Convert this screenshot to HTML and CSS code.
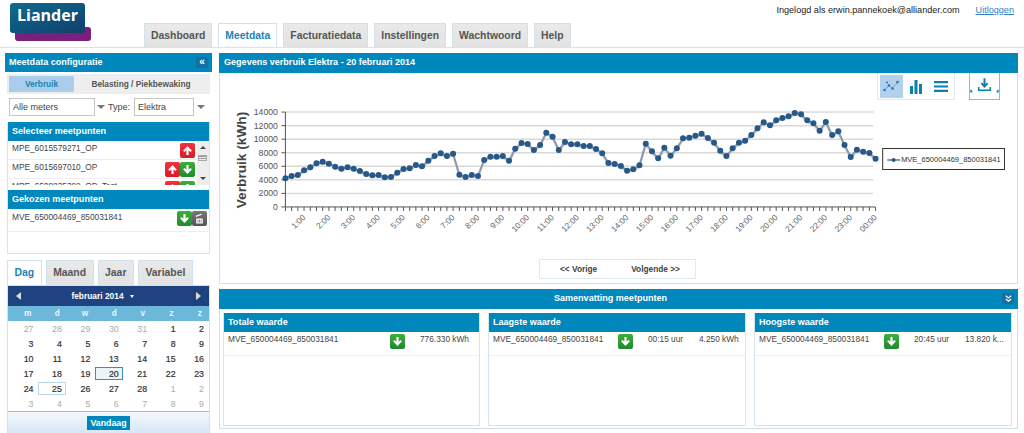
FILE: index.html
```html
<!DOCTYPE html>
<html>
<head>
	<meta charset="utf-8">
	<title>Meetdata</title>
	<link rel="stylesheet" href="styles.css">
</head>
<body>
	<svg class="defs" width="0" height="0">
		<symbol id="arrow-up" viewBox="0 0 10 10"><path d="M5 1 9 5.2 7.6 6.4 6 4.8V9H4V4.8L2.4 6.4 1 5.2z" fill="#fff"/></symbol>
		<symbol id="arrow-down" viewBox="0 0 10 10"><path d="M5 9 9 4.8 7.6 3.6 6 5.2V1H4v4.2L2.4 3.6 1 4.8z" fill="#fff"/></symbol>
		<symbol id="bin" viewBox="0 0 10 10"><path d="M2 5h6v4.5H2zM1.5 2.6 6.6.6l.4 1-5.1 2z" fill="#fff"/><path d="M3.6 6v2.6M5 6v2.6M6.4 6v2.6" stroke="#555" stroke-width=".6"/></symbol>
	</svg>

	<div class="header">
		<div class="logo">
			<div class="logo-purple"></div>
			<div class="logo-blue">Liander</div>
		</div>
		<div class="tabs main-tabs">
			<span class="tab">Dashboard</span>
			<span class="tab active">Meetdata</span>
			<span class="tab">Facturatiedata</span>
			<span class="tab">Instellingen</span>
			<span class="tab">Wachtwoord</span>
			<span class="tab">Help</span>
		</div>
		<div class="user">
			<span>Ingelogd als erwin.pannekoek@alliander.com</span>
			<a href="#">Uitloggen</a>
		</div>
	</div>

	<div class="layout">
		<div class="sidebar">
			<div class="config">
				<div class="bar">Meetdata configuratie<span class="collapse">«</span></div>
				<div class="segments">
					<span class="segment active">Verbruik</span>
					<span class="segment wide">Belasting / Piekbewaking</span>
				</div>
				<div class="filters">
					<span class="select meters">Alle meters</span><span class="caret"></span>
					<span class="type-label">Type:</span>
					<span class="select types">Elektra</span><span class="caret"></span>
				</div>
				<div class="block">
					<div class="bar sub">Selecteer meetpunten</div>
					<div class="listbox">
						<div class="rows">
							<div class="row"><span class="name">MPE_6015579271_OP</span><span class="btn red"><svg><use href="#arrow-up"/></svg></span></div>
							<div class="row"><span class="name">MPE_6015697010_OP</span><span class="btn red"><svg><use href="#arrow-up"/></svg></span><span class="btn green"><svg><use href="#arrow-down"/></svg></span></div>
							<div class="row"><span class="name">MPE_6508835382_OP_Test</span><span class="btn red"><svg><use href="#arrow-up"/></svg></span><span class="btn green"><svg><use href="#arrow-down"/></svg></span></div>
						</div>
						<div class="scrollbar">
							<span class="scroll-up"></span>
							<span class="thumb"></span>
							<span class="scroll-down"></span>
						</div>
					</div>
					<div class="bar sub chosen">Gekozen meetpunten</div>
					<div class="chosen-list">
						<div class="row"><span class="name">MVE_650004469_850031841</span><span class="btn green"><svg><use href="#arrow-down"/></svg></span><span class="btn grey"><svg><use href="#bin"/></svg></span></div>
					</div>
				</div>
			</div>

			<div class="tabs date-tabs">
				<span class="tab active">Dag</span>
				<span class="tab">Maand</span>
				<span class="tab">Jaar</span>
				<span class="tab">Variabel</span>
			</div>
			<div class="calendar">
				<div class="cal-head">
					<span class="cal-prev"></span>
					<span class="cal-title">februari 2014<span class="cal-caret"></span></span>
					<span class="cal-next"></span>
				</div>
				<div class="cal-days">
					<span>m</span><span>d</span><span>w</span><span>d</span><span>v</span><span>z</span><span>z</span>
				</div>
				<div class="cal-grid">
					<span class="off">27</span><span class="off">28</span><span class="off">29</span><span class="off">30</span><span class="off">31</span><span>1</span><span>2</span>
					<span>3</span><span>4</span><span>5</span><span>6</span><span>7</span><span>8</span><span>9</span>
					<span>10</span><span>11</span><span>12</span><span>13</span><span>14</span><span>15</span><span>16</span>
					<span>17</span><span>18</span><span>19</span><span class="selected">20</span><span>21</span><span>22</span><span>23</span>
					<span>24</span><span class="today">25</span><span>26</span><span>27</span><span>28</span><span class="off">1</span><span class="off">2</span>
					<span class="off">3</span><span class="off">4</span><span class="off">5</span><span class="off">6</span><span class="off">7</span><span class="off">8</span><span class="off">9</span>
				</div>
				<div class="cal-foot"><span class="today-btn">Vandaag</span></div>
			</div>
		</div>

		<div class="main">
			<div class="panel chart-panel">
				<div class="bar big">Gegevens verbruik Elektra - 20 februari 2014</div>
				<div class="toolbar">
					<div class="tool-group">
						<span class="tool active">
							<svg viewBox="0 0 18 14" width="18" height="14"><path d="M2 11 7 7l3 2 6-6" fill="none" stroke="#4d8fc0" stroke-width="1" stroke-dasharray="2 1"/><g fill="#1b7fae"><circle cx="2.5" cy="11" r="1.3"/><circle cx="7" cy="6.5" r="1.3"/><circle cx="10.5" cy="9.5" r="1.3"/><circle cx="15.5" cy="3" r="1.3"/><circle cx="5" cy="3.5" r="1"/></g></svg>
						</span>
						<span class="tool">
							<svg viewBox="0 0 14 15" width="14" height="15"><path d="M1 7h3v8H1zM5.500 1h3v14h-3zM10 5h3v10h-3z" fill="#0a7fb0"/></svg>
						</span>
						<span class="tool">
							<svg viewBox="0 0 14 11" width="14" height="11"><path d="M0 0h14v2.200H0zM0 4.400h14v2.200H0zM0 8.800h14V11H0z" fill="#0a7fb0"/></svg>
						</span>
					</div>
					<span class="download">
						<svg viewBox="0 0 30 18" width="30" height="18"><path d="M15 1v7M11.800 6 15 9.500 18.200 6" fill="none" stroke="#0a7fb0" stroke-width="2"/><path d="M9 10v3.500h12V10" fill="none" stroke="#0a7fb0" stroke-width="1.600"/><path d="M1 13v2h1.500M29 13v2h-1.500" fill="none" stroke="#0a7fb0" stroke-width="1.400"/></svg>
					</span>
				</div>
				<svg id="chart" class="chart" viewBox="219 73 798 184"></svg>
				<div class="pager">
					<span>&lt;&lt; Vorige</span>
					<span>Volgende &gt;&gt;</span>
				</div>
			</div>

			<div class="panel summary">
				<div class="bar big center">Samenvatting meetpunten
					<span class="expand"><svg viewBox="0 0 10 10" width="9" height="9"><path d="M2 2l3 2.500L8 2M2 5.500 5 8l3-2.500" fill="none" stroke="#fff" stroke-width="1.300"/></svg></span>
				</div>
				<div class="cards">
					<div class="card">
						<div class="bar sub">Totale waarde</div>
						<div class="card-row">
							<span class="name long">MVE_650004469_850031841</span>
							<span class="btn green"><svg><use href="#arrow-down"/></svg></span>
							<span class="val total">776.330 kWh</span>
						</div>
					</div>
					<div class="card">
						<div class="bar sub">Laagste waarde</div>
						<div class="card-row">
							<span class="name">MVE_650004469_850031841</span>
							<span class="btn green"><svg><use href="#arrow-down"/></svg></span>
							<span class="val time">00:15 uur</span>
							<span class="val amount">4.250 kWh</span>
						</div>
					</div>
					<div class="card">
						<div class="bar sub">Hoogste waarde</div>
						<div class="card-row">
							<span class="name">MVE_650004469_850031841</span>
							<span class="btn green"><svg><use href="#arrow-down"/></svg></span>
							<span class="val time">20:45 uur</span>
							<span class="val amount">13.820 k...</span>
						</div>
					</div>
				</div>
			</div>
		</div>
	</div>

	<script type="text/javascript">
		// y of each quarter, read as page pixels * 3 from y = 50
		var ys = [385,378,375,361,352,340,335,341,350,356,352,356,363,372,376,375,382,381,368,357,355,345,349,332,
			318,310,318,311,374,381,375,378,330,320,320,318,332,296,279,282,300,285,248,260,300,276,283,283,
			288,288,297,310,339,342,348,362,358,346,281,304,325,293,317,295,265,263,257,251,264,278,302,318,
			295,278,272,255,235,217,226,211,204,199,189,193,211,220,242,216,255,244,285,321,299,305,309,326];
		var x0 = 284.5, dx = 6.22, bottom = 207, step = 13.57;
		var s = "";

		for (var v = 1; v <= 7; v++) {
			var gy = bottom - v * step;
			s += `<line x1="${x0}" x2="873" y1="${gy}" y2="${gy}" class="grid"/>`;
		}
		s += `<line x1="${x0}" x2="${x0}" y1="${bottom - 7 * step}" y2="${bottom}" class="axis"/>`;
		s += `<line x1="${x0}" x2="875" y1="${bottom}" y2="${bottom}" class="axis"/>`;

		for (var v = 0; v <= 7; v++) {
			var gy = bottom - v * step;
			s += `<line x1="${x0 - 4}" x2="${x0}" y1="${gy}" y2="${gy}" class="axis"/>`;
			s += `<text x="277" y="${gy + 3}" class="tick-y">${v * 2000}</text>`;
		}

		var pts = [], dots = "";
		for (var i = 0; i < ys.length; i++) {
			var px = x0 + dx * i;
			var py = 50 + ys[i] / 3;
			pts.push(px.toFixed(1) + "," + py.toFixed(1));
			dots += `<circle cx="${px.toFixed(1)}" cy="${py.toFixed(1)}" r="3" class="dot"/>`;
			s += `<line x1="${px}" x2="${px}" y1="${bottom}" y2="${bottom + 4}" class="axis"/>`;
			if (i % 4 == 3) {
				var hour = (i + 1) / 4;
				var label = hour == 24 ? "00:00" : hour + ":00";
				s += `<text x="${px + 2}" y="${bottom + 11}" class="tick-x" transform="rotate(-45 ${px + 2} ${bottom + 11})">${label}</text>`;
			}
		}
		s += `<polyline points="${pts.join(" ")}" class="shadow" transform="translate(0 1.5)"/>`;
		s += `<polyline points="${pts.join(" ")}" class="series"/>`;
		s += dots;

		s += `<text transform="translate(245 160) rotate(-90)" class="y-title">Verbruik (kWh)</text>`;

		s += `<rect x="882.5" y="148.500" width="122" height="21" class="legend"/>`;
		s += `<line x1="887" x2="900" y1="160" y2="160" class="series"/><circle cx="893.500" cy="160" r="2" class="dot"/>`;
		s += `<text x="901" y="162.500" class="legend-text">MVE_650004469_850031841</text>`;

		document.getElementById("chart").innerHTML = s;
	</script>
</body>
</html>
```

FILE: styles.css
```css
html, body {
	margin: 0;
	height: 433px;
	overflow: hidden;
}
body {
	font-family: "Liberation Sans", Arial, sans-serif;
	font-size: 8.3px;
	color: #444;
	background: #fff;
}
.defs {
	position: absolute;
}

/* header */
.header {
	display: flex;
	height: 47px;
	border-bottom: 1px solid #d3e6f0;
	box-sizing: content-box;
}
.logo {
	position: relative;
	width: 144px;
	flex: none;
}
.logo-purple {
	position: absolute;
	left: 15px;
	top: 27px;
	width: 76px;
	height: 14px;
	background: #7b1f7f;
	border-radius: 3px;
}
.logo-blue {
	position: absolute;
	left: 10px;
	top: 3px;
	width: 75px;
	height: 30px;
	box-sizing: border-box;
	padding: 2px 0 0 7px;
	background: linear-gradient(160deg, #106c8c, #0e4d78 70%, #123f6a);
	border-radius: 3px;
	color: #fff;
	font-family: "Open Sans", sans-serif;
	font-size: 16px;
	font-weight: 700;
	line-height: 20px;
}
.tabs {
	display: flex;
}
.main-tabs {
	align-self: flex-end;
	gap: 6px;
}
.tab {
	display: block;
	box-sizing: border-box;
	padding: 0 6px;
	height: 24px;
	line-height: 23px;
	background: linear-gradient(#e9e9e9, #e2e2e2);
	border: 1px solid #cfe3ee;
	border-bottom: none;
	color: #555;
	font-size: 10.4px;
	font-weight: bold;
}
.tab.active {
	background: #fff;
	color: #1b84b4;
}
.user {
	margin-left: auto;
	display: flex;
	gap: 16px;
	padding: 5px 10px 0 0;
	color: #222;
	font-size: 9.1px;
	line-height: 10px;
}
.user a {
	color: #2f7fc4;
}

/* layout */
.layout {
	display: flex;
	gap: 5px;
	padding: 5px 0 0 3px;
}
.sidebar {
	width: 211px;
	flex: none;
}
.main {
	width: 799px;
	flex: none;
	display: flex;
	flex-direction: column;
	gap: 5px;
}
.bar {
	height: 19px;
	line-height: 18px;
	padding: 0 4px;
	background: #0087bb;
	color: #fff;
	font-size: 9.05px;
	font-weight: bold;
}
.config {
	height: 202px;
	padding: 0 2px;
	box-sizing: border-box;
}
.config > .bar {
	position: relative;
}
.collapse {
	position: absolute;
	right: 4px;
	top: 4px;
	width: 12px;
	height: 11px;
	line-height: 10px;
	text-align: center;
	background: #1470a0;
	font-size: 10px;
}
.segments {
	display: flex;
	height: 20px;
	margin: 2px 2px 0;
	padding: 1px;
	box-sizing: border-box;
	background: #eee;
	border: 1px solid #e3eef4;
	font-size: 8.3px;
	font-weight: bold;
	line-height: 16px;
	text-align: center;
}
.segment {
	width: 65px;
	background: #aacdec;
	color: #1b84b4;
}
.segment.wide {
	flex: 1;
	background: none;
	color: #555;
}
.filters {
	display: flex;
	align-items: center;
	margin: 4px 0 0 4px;
	height: 18px;
	color: #444;
	font-size: 9px;
}
.select {
	box-sizing: border-box;
	height: 18px;
	line-height: 17px;
	padding-left: 3px;
	border: 1px solid #c6c6c6;
	background: #fff;
}
.meters {
	width: 86px;
}
.types {
	width: 60px;
}
.caret {
	margin: 0 0 0 2px;
	border: 4px solid transparent;
	border-top: 4px solid #777;
	border-bottom: none;
}
.types + .caret {
	margin-left: 3px;
}
.type-label {
	margin: 0 4px 0 3px;
}
.block {
	margin: 6px 2px 0;
	height: 132px;
	box-sizing: border-box;
	border: 1px solid #d3e6f0;
	border-top: none;
}
.listbox {
	display: flex;
	height: 44px;
	overflow: hidden;
}
.rows {
	flex: 1;
}
.row {
	display: flex;
	align-items: center;
	height: 19px;
	box-sizing: border-box;
	padding: 0 2px 0 4px;
	border-bottom: 1px solid #eee;
	background: #fff;
}
.row .name {
	flex: 1;
	white-space: nowrap;
	color: #444;
	padding-bottom: 4px;
}
.scrollbar {
	position: relative;
	width: 12px;
	background: #eee;
}
.scroll-up, .scroll-down {
	position: absolute;
	left: 3px;
	border: 3px solid transparent;
}
.scroll-up {
	top: 5px;
	border-bottom-color: #444;
	border-top: none;
}
.scroll-down {
	bottom: 5px;
	border-top-color: #444;
	border-bottom: none;
}
.thumb {
	position: absolute;
	left: 1px;
	top: 14px;
	width: 9px;
	height: 6px;
	background: repeating-linear-gradient(#999 0 1px, #eee 1px 2px);
	border: 1px solid #aaa;
	box-sizing: border-box;
}
.bar.chosen {
	margin-top: 5px;
}
.chosen-list .row {
	height: 23px;
	padding: 0 2px 3px 4px;
}
.btn {
	display: block;
	flex: none;
	width: 15px;
	height: 15px;
	border-radius: 2px;
}
.btn svg {
	display: block;
	width: 11px;
	height: 11px;
	margin: 2px;
}
.btn.red {
	background: linear-gradient(#f4303c, #d81c26);
}
.btn.green {
	background: linear-gradient(#3caf3c, #1f8a2c);
}
.btn.grey {
	background: linear-gradient(#777, #555);
}

/* date picker */
.date-tabs {
	gap: 4px;
	margin: 5px 0 0 4px;
	height: 25px;
}
.date-tabs .tab {
	height: 25px;
	line-height: 24px;
	padding: 0 6.5px;
}
.calendar {
	margin: 0 2px 0 4px;
	border: 1px solid #cfe3ee;
	height: 148px;
	box-sizing: border-box;
	width: 203px;
}
.cal-head {
	display: flex;
	align-items: center;
	justify-content: space-between;
	height: 20px;
	padding: 0 8px;
	background: #1f4280;
	color: #fff;
	font-weight: bold;
	font-size: 8.4px;
}
.cal-prev {
	border: 4px solid transparent;
	border-right: 5px solid #ddd;
	border-left: none;
}
.cal-next {
	border: 4px solid transparent;
	border-left: 5px solid #ddd;
	border-right: none;
}
.cal-title {
	display: flex;
	align-items: center;
	gap: 6px;
	margin-right: 12px;
}
.cal-caret {
	border: 2.500px solid transparent;
	border-top: 3px solid #fff;
	border-bottom: none;
}
.cal-days, .cal-grid {
	display: grid;
	grid-template-columns: repeat(7, 1fr);
	padding: 0 0 0 2px;
}
.cal-days {
	height: 15px;
	line-height: 15px;
	background: #6cb8da;
	color: #e8f6fb;
	font-weight: bold;
	text-align: right;
}
.cal-days span {
	padding-right: 7px;
}
.cal-grid {
	height: 90px;
	grid-auto-rows: 15px;
	color: #333;
	font-size: 8.800px;
	line-height: 13px;
	text-align: right;
}
.cal-grid span {
	margin: 1px 1px 1px 0;
	padding-right: 3px;
	border: 1px solid transparent;
	box-sizing: border-box;
	-webkit-text-stroke: 0.2px #333;
}
.cal-grid .off {
	color: #aaa;
	-webkit-text-stroke: 0;
}
.cal-grid .selected {
	border-color: #3b8fb5;
	background: #eaf4fa;
}
.cal-grid .today {
	border-color: #b9d7e8;
}
.cal-foot {
	height: 21px;
	display: flex;
	justify-content: center;
	align-items: center;
	border-top: 1px solid #8cc4de;
	background: linear-gradient(#f4f8fc, #d8e6f6);
}
.today-btn {
	padding: 0 3px;
	height: 14px;
	line-height: 14px;
	background: #0087bb;
	color: #fff;
	font-weight: bold;
	font-size: 8.800px;
}

/* main panels */
.panel {
	position: relative;
	box-sizing: border-box;
	border: 1px solid #cfe0ea;
	border-top: none;
}
.chart-panel {
	height: 231px;
}
.bar.big {
	height: 20px;
	margin: 0 -1px;
	line-height: 18px;
	padding-left: 5px;
}
.chart {
	display: block;
	width: 797px;
	height: 184px;
}
.chart .grid {
	stroke: #d9d9d9;
	stroke-width: 1.5;
}
.chart .axis {
	stroke: #555;
	stroke-width: 1;
}
.chart text {
	font-family: "Liberation Sans", Arial, sans-serif;
}
.chart .tick-y {
	font-size: 8.700px;
	fill: #555;
	text-anchor: end;
}
.chart .tick-x {
	font-size: 8.300px;
	fill: #666;
	text-anchor: end;
}
.chart .y-title {
	font-size: 13.700px;
	font-weight: bold;
	fill: #444;
	text-anchor: middle;
}
.chart .series {
	fill: none;
	stroke: #8a9aab;
	stroke-width: 2;
}
.chart .shadow {
	fill: none;
	stroke: #d5d5d5;
	stroke-width: 2;
}
.chart .dot {
	fill: #27588a;
}
.chart .legend {
	fill: #fff;
	stroke: #333;
}
.chart .legend-text {
	font-size: 7.500px;
	fill: #333;
}
.toolbar {
	position: absolute;
	top: 20px;
	right: 17px;
	display: flex;
	gap: 14px;
}
.tool-group {
	display: flex;
	align-items: center;
	gap: 2px;
	width: 78px;
	height: 27px;
	box-sizing: border-box;
	padding: 2px;
	border: 1px solid #dfecf4;
	border-top: none;
}
.tool {
	display: flex;
	align-items: center;
	justify-content: center;
	width: 23px;
	height: 23px;
}
.tool.active {
	background: #b3d1ec;
}
.download {
	display: flex;
	align-items: flex-end;
	justify-content: center;
	width: 31px;
	height: 27px;
	box-sizing: border-box;
	padding-bottom: 4px;
	border: 1px solid #8fb9d0;
	border-top: none;
}
.pager {
	display: flex;
	gap: 34px;
	width: 157px;
	height: 20px;
	margin: 2px 0 0 319px;
	padding-left: 20px;
	box-sizing: border-box;
	border: 1px solid #dceaf2;
	line-height: 18px;
	font-weight: bold;
	color: #444;
}
.summary {
	height: 140px;
}
.bar.center {
	position: relative;
	text-align: center;
	padding: 0 16px 0 0;
}
.expand {
	position: absolute;
	right: 4px;
	top: 4px;
	width: 12px;
	height: 11px;
	display: flex;
	align-items: center;
	justify-content: center;
	background: #1470a0;
}
.cards {
	display: grid;
	grid-template-columns: 257px 258px 258px;
	gap: 8px;
	padding: 4px 0 0 3px;
}
.card {
	height: 113px;
	box-sizing: border-box;
	border: 1px solid #d3e6f0;
	border-top: none;
}
.card-row {
	height: 24px;
	border-bottom: 1px solid #eee;
	display: flex;
	padding: 2px 0 0 4px;
	box-sizing: border-box;
	color: #444;
	line-height: 10px;
}
.card-row .name {
	width: 125px;
	flex: none;
}
.card-row .name.long {
	width: 162px;
}
.card-row .val {
	white-space: nowrap;
}
.total {
	margin-left: 15px;
}
.time {
	margin-left: 15px;
	width: 51px;
}
```
